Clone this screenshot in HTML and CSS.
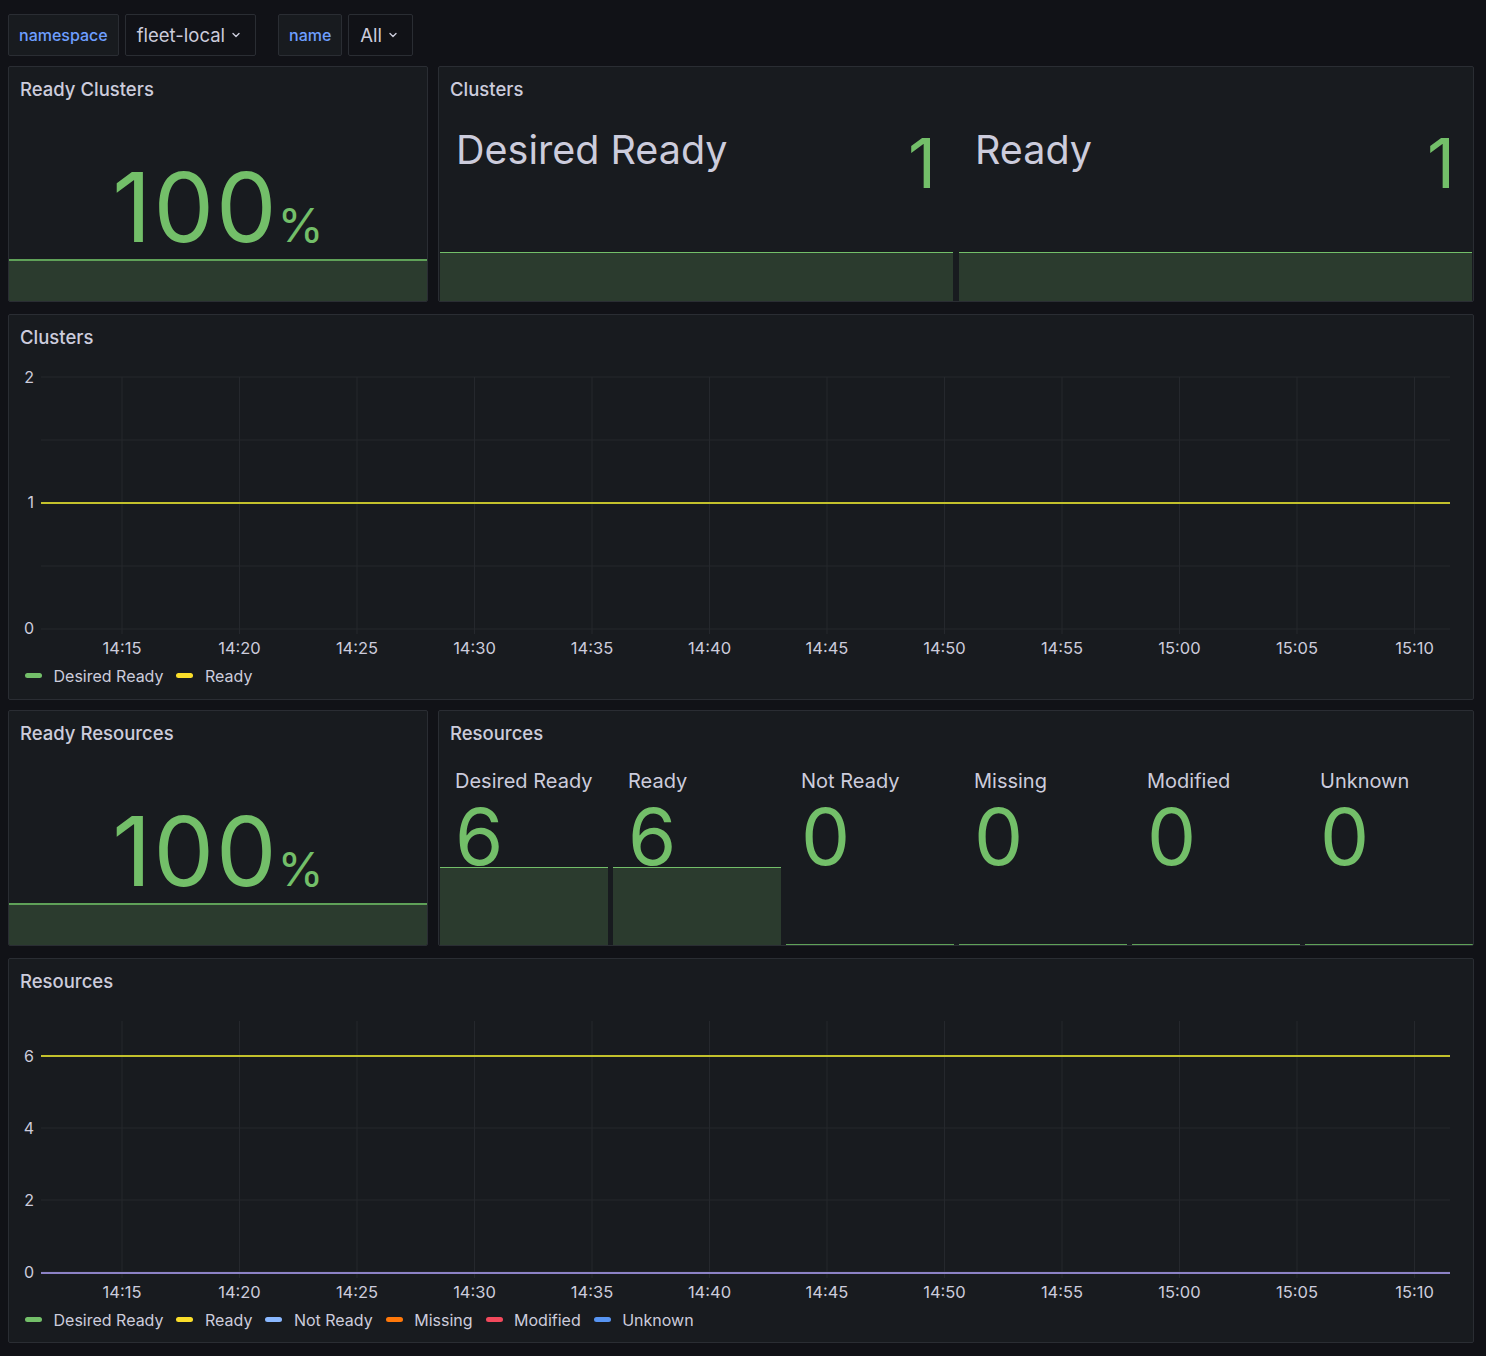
FILE: index.html
```html
<!DOCTYPE html>
<html lang="en">
<head>
<meta charset="utf-8">
<title>Fleet Clusters</title>
<link rel="stylesheet" href="styles.css">
</head>
<body>
<div class="dash">
  <div class="vars">
    <div class="var">
      <span class="var-label">namespace</span>
      <span class="var-value">fleet-local <svg class="chev" viewBox="0 0 10 10" width="10" height="10"><path d="M2 3.5 L5 6.5 L8 3.5" fill="none" stroke="#ccccdc" stroke-width="1.4" stroke-linecap="round" stroke-linejoin="round"/></svg></span>
    </div>
    <div class="var">
      <span class="var-label">name</span>
      <span class="var-value">All <svg class="chev" viewBox="0 0 10 10" width="10" height="10"><path d="M2 3.5 L5 6.5 L8 3.5" fill="none" stroke="#ccccdc" stroke-width="1.4" stroke-linecap="round" stroke-linejoin="round"/></svg></span>
    </div>
  </div>

  <div class="row">
    <section class="panel">
      <header class="panel-title">Ready Clusters</header>
      <div class="single">
        <div class="spark spark-single"></div>
        <div class="big">100<span class="unit">%</span></div>
      </div>
    </section>
    <section class="panel">
      <header class="panel-title">Clusters</header>
      <div class="subs subs-two">
        <div class="sub-h">
          <div class="sub-h-row"><span class="sub-h-name">Desired Ready</span><span class="sub-h-val">1</span></div>
          <div class="spark spark-h"></div>
        </div>
        <div class="sub-h">
          <div class="sub-h-row"><span class="sub-h-name">Ready</span><span class="sub-h-val">1</span></div>
          <div class="spark spark-h"></div>
        </div>
      </div>
    </section>
  </div>

  <section class="panel graph">
    <header class="panel-title">Clusters</header>
    <svg class="chart" viewBox="0 0 1463 302" width="1463" height="302">
      <g class="grid">
        <line x1="32" y1="19" x2="1441" y2="19"/>
        <line x1="32" y1="82" x2="1441" y2="82"/>
        <line x1="32" y1="145" x2="1441" y2="145"/>
        <line x1="32" y1="208" x2="1441" y2="208"/>
        <line x1="32" y1="271" x2="1441" y2="271"/>
        <line x1="113" y1="19" x2="113" y2="276"/>
        <line x1="230.5" y1="19" x2="230.5" y2="276"/>
        <line x1="348" y1="19" x2="348" y2="276"/>
        <line x1="465.5" y1="19" x2="465.5" y2="276"/>
        <line x1="583" y1="19" x2="583" y2="276"/>
        <line x1="700.5" y1="19" x2="700.5" y2="276"/>
        <line x1="818" y1="19" x2="818" y2="276"/>
        <line x1="935.5" y1="19" x2="935.5" y2="276"/>
        <line x1="1053" y1="19" x2="1053" y2="276"/>
        <line x1="1170.5" y1="19" x2="1170.5" y2="276"/>
        <line x1="1288" y1="19" x2="1288" y2="276"/>
        <line x1="1405.5" y1="19" x2="1405.5" y2="276"/>
      </g>
      <g class="ylab">
        <text x="25" y="19">2</text>
        <text x="25" y="144">1</text>
        <text x="25" y="270">0</text>
      </g>
      <g class="xlab">
        <text x="113" y="290">14:15</text>
        <text x="230.5" y="290">14:20</text>
        <text x="348" y="290">14:25</text>
        <text x="465.5" y="290">14:30</text>
        <text x="583" y="290">14:35</text>
        <text x="700.5" y="290">14:40</text>
        <text x="818" y="290">14:45</text>
        <text x="935.5" y="290">14:50</text>
        <text x="1053" y="290">14:55</text>
        <text x="1170.5" y="290">15:00</text>
        <text x="1288" y="290">15:05</text>
        <text x="1405.5" y="290">15:10</text>
      </g>
      <line class="series s-green" x1="32" y1="145" x2="1441" y2="145"/>
      <line class="series s-olive" x1="32" y1="145" x2="1441" y2="145"/>
    </svg>
    <div class="legend">
      <span class="leg"><i class="mk c-green"></i>Desired Ready</span>
      <span class="leg"><i class="mk c-yellow"></i>Ready</span>
    </div>
  </section>

  <div class="row">
    <section class="panel">
      <header class="panel-title">Ready Resources</header>
      <div class="single">
        <div class="spark spark-single"></div>
        <div class="big">100<span class="unit">%</span></div>
      </div>
    </section>
    <section class="panel">
      <header class="panel-title">Resources</header>
      <div class="subs subs-six">
        <div class="sub-v">
          <span class="sub-v-name">Desired Ready</span>
          <span class="sub-v-val">6</span>
          <div class="spark spark-v"></div>
        </div>
        <div class="sub-v">
          <span class="sub-v-name">Ready</span>
          <span class="sub-v-val">6</span>
          <div class="spark spark-v"></div>
        </div>
        <div class="sub-v">
          <span class="sub-v-name">Not Ready</span>
          <span class="sub-v-val">0</span>
          <div class="spark-zero"></div>
        </div>
        <div class="sub-v">
          <span class="sub-v-name">Missing</span>
          <span class="sub-v-val">0</span>
          <div class="spark-zero"></div>
        </div>
        <div class="sub-v">
          <span class="sub-v-name">Modified</span>
          <span class="sub-v-val">0</span>
          <div class="spark-zero"></div>
        </div>
        <div class="sub-v">
          <span class="sub-v-name">Unknown</span>
          <span class="sub-v-val">0</span>
          <div class="spark-zero"></div>
        </div>
      </div>
    </section>
  </div>

  <section class="panel graph graph-last">
    <header class="panel-title">Resources</header>
    <svg class="chart" viewBox="0 0 1463 302" width="1463" height="302">
      <g class="grid">
        <line x1="32" y1="54" x2="1441" y2="54"/>
        <line x1="32" y1="126" x2="1441" y2="126"/>
        <line x1="32" y1="198" x2="1441" y2="198"/>
        <line x1="32" y1="270" x2="1441" y2="270"/>
        <line x1="113" y1="19" x2="113" y2="276"/>
        <line x1="230.5" y1="19" x2="230.5" y2="276"/>
        <line x1="348" y1="19" x2="348" y2="276"/>
        <line x1="465.5" y1="19" x2="465.5" y2="276"/>
        <line x1="583" y1="19" x2="583" y2="276"/>
        <line x1="700.5" y1="19" x2="700.5" y2="276"/>
        <line x1="818" y1="19" x2="818" y2="276"/>
        <line x1="935.5" y1="19" x2="935.5" y2="276"/>
        <line x1="1053" y1="19" x2="1053" y2="276"/>
        <line x1="1170.5" y1="19" x2="1170.5" y2="276"/>
        <line x1="1288" y1="19" x2="1288" y2="276"/>
        <line x1="1405.5" y1="19" x2="1405.5" y2="276"/>
      </g>
      <g class="ylab">
        <text x="25" y="54">6</text>
        <text x="25" y="126">4</text>
        <text x="25" y="198">2</text>
        <text x="25" y="270">0</text>
      </g>
      <g class="xlab">
        <text x="113" y="290">14:15</text>
        <text x="230.5" y="290">14:20</text>
        <text x="348" y="290">14:25</text>
        <text x="465.5" y="290">14:30</text>
        <text x="583" y="290">14:35</text>
        <text x="700.5" y="290">14:40</text>
        <text x="818" y="290">14:45</text>
        <text x="935.5" y="290">14:50</text>
        <text x="1053" y="290">14:55</text>
        <text x="1170.5" y="290">15:00</text>
        <text x="1288" y="290">15:05</text>
        <text x="1405.5" y="290">15:10</text>
      </g>
      <line class="series s-olive" x1="32" y1="54" x2="1441" y2="54"/>
      <line class="series s-lav" x1="32" y1="271" x2="1441" y2="271"/>
    </svg>
    <div class="legend">
      <span class="leg"><i class="mk c-green"></i>Desired Ready</span>
      <span class="leg"><i class="mk c-yellow"></i>Ready</span>
      <span class="leg"><i class="mk c-lblue"></i>Not Ready</span>
      <span class="leg"><i class="mk c-orange"></i>Missing</span>
      <span class="leg"><i class="mk c-red"></i>Modified</span>
      <span class="leg"><i class="mk c-blue"></i>Unknown</span>
    </div>
  </section>
</div>
</body>
</html>
```

FILE: styles.css
```css
* { box-sizing: border-box; }

html, body {
  margin: 0;
  padding: 0;
  background: #111217;
}

body {
  font-family: Inter, "Noto Sans", "Liberation Sans", sans-serif;
  color: #ccccdc;
  width: 1486px;
  height: 1356px;
  overflow: hidden;
}

.dash {
  padding: 14px 12px 0 8px;
  display: flex;
  flex-direction: column;
  gap: 10px;
}

/* variables bar */
.vars {
  display: flex;
  gap: 22px;
  height: 42px;
}

.var {
  display: flex;
  gap: 6px;
}

.var-label,
.var-value {
  display: flex;
  align-items: center;
  border: 1px solid #2a2d33;
  border-radius: 2px;
  height: 42px;
}

.var-label {
  background: #181b1f;
  color: #6e9fff;
  font-size: 16px;
  font-weight: 500;
  padding: 0 10px;
}

.var-value {
  background: #111217;
  color: #ccccdc;
  font-size: 18.5px;
  padding: 0 14px 0 11px;
  gap: 6px;
}

.chev { display: block; }

/* panels */
.row {
  display: grid;
  grid-template-columns: 420px 1fr;
  gap: 10px;
  height: 236px;
}

.panel {
  background: #181b1f;
  border: 1px solid #2a2d33;
  border-radius: 2px;
  display: flex;
  flex-direction: column;
  overflow: hidden;
  min-height: 0;
}

.panel-title {
  height: 43px;
  flex: 0 0 43px;
  display: flex;
  align-items: center;
  padding: 0 11px;
  font-size: 18.5px;
  font-weight: 500;
  color: #ccccdc;
}

/* single stat */
.single {
  flex: 1;
  min-height: 0;
  display: grid;
  grid-template: 1fr / 1fr;
}

.single > * { grid-area: 1 / 1; }

.spark {
  background: #2b3b2e;
  border-top: 1px solid #73bf69;
}

.spark-single {
  align-self: end;
  height: 42px;
  border-top: 2px solid #5fa158;
}

.big {
  align-self: center;
  justify-self: center;
  font-size: 96px;
  line-height: 1;
  color: #73bf69;
  letter-spacing: 2px;
  padding-left: 0;
  margin-top: 2px;
}

.unit {
  font-size: 47px;
  letter-spacing: 0;
  margin-left: -1px;
}

/* sub stats */
.subs {
  flex: 1;
  min-height: 0;
  overflow: hidden;
  display: flex;
  padding: 0 1px 0 1px;
}

.subs-two { gap: 6px; }
.subs-six { gap: 5px; padding-right: 0; }

.sub-h {
  flex: 1;
  display: flex;
  flex-direction: column;
  justify-content: space-between;
}

.sub-h-row {
  display: flex;
  justify-content: space-between;
  align-items: flex-start;
  padding: 19px 17px 0 16px;
}

.sub-h-name {
  font-size: 39.5px;
  line-height: 1;
  color: #ccccdc;
  margin-top: 2px;
}

.sub-h-val {
  font-size: 69px;
  line-height: 1;
  color: #73bf69;
}

.spark-h { height: 49px; }

.sub-v {
  flex: 1;
  min-height: 0;
  display: flex;
  flex-direction: column;
  padding-top: 17px;
}

.sub-v-name {
  font-size: 20px;
  line-height: 1;
  padding-left: 15px;
  color: #ccccdc;
}

.sub-v-val {
  font-size: 78px;
  line-height: 1;
  color: #73bf69;
  padding-left: 15px;
  margin-top: 7px;
  height: 68px;
}

.spark-v {
  margin-top: auto;
  height: 78px;
  flex: 0 0 78px;
}

.spark-zero {
  margin-top: auto;
  margin-bottom: -1px;
  height: 2px;
  flex: 0 0 2px;
  background: #5fa158;
}

/* graphs */
.graph {
  height: 386px;
  margin-top: 2px;
}

.graph-last { height: 385px; }

.chart {
  display: block;
  flex: 0 0 302px;
}

.grid line {
  stroke: #25282d;
  stroke-width: 1;
}

.ylab text {
  fill: #ccccdc;
  font-family: Inter, "Noto Sans", sans-serif;
  font-size: 16px;
  text-anchor: end;
  dominant-baseline: central;
}

.xlab text {
  fill: #ccccdc;
  font-family: Inter, "Noto Sans", sans-serif;
  font-size: 16.5px;
  text-anchor: middle;
  dominant-baseline: central;
}

.series { stroke-width: 2; }
.s-green { stroke: #73bf69; }
.s-olive { stroke: #c3c12c; }
.s-lav { stroke: #8c82c6; }

.legend {
  height: 31px;
  display: flex;
  align-items: center;
  gap: 13px;
  padding-left: 16px;
  font-size: 16px;
  color: #ccccdc;
}

.leg {
  display: flex;
  align-items: center;
  gap: 11.5px;
}

.mk {
  display: block;
  width: 17px;
  height: 5px;
  border-radius: 3px;
}

.c-green { background: #73bf69; }
.c-yellow { background: #fade2a; }
.c-lblue { background: #8ab8ff; }
.c-orange { background: #ff780a; }
.c-red { background: #f2495c; }
.c-blue { background: #5794f2; }
```
